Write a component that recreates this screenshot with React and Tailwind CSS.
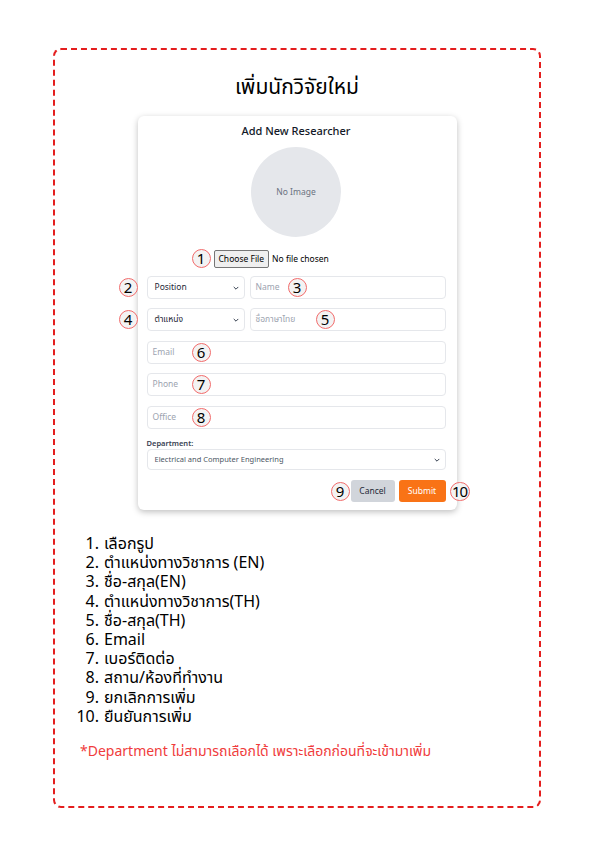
const Num = ({ n, className = "" }) => (
  <span
    className={`absolute flex items-center justify-center w-[19px] h-[19px] rounded-full border border-[#f26b6b] bg-[#f3f3f3] text-[15px] leading-none text-black ${className}`}
  >
    {n}
  </span>
);

const Chevron = () => (
  <svg width="8" height="8" viewBox="0 0 20 20" fill="none" stroke="#374151" strokeWidth="2.5" strokeLinecap="round" strokeLinejoin="round">
    <path d="M5 8l5 5 5-5" />
  </svg>
);

const Field = ({ placeholder, className = "" }) => (
  <div
    className={`h-[23px] rounded border border-[#e5e7eb] bg-white flex items-center px-[5px] text-[8.5px] text-[#9ca3af] ${className}`}
  >
    {placeholder}
  </div>
);

const Select = ({ label, className = "" }) => (
  <div
    className={`h-[23px] rounded border border-[#e5e7eb] bg-white flex items-center justify-between pl-[7px] pr-[4px] text-[8.5px] text-[#1f2937] ${className}`}
  >
    <span>{label}</span>
    <Chevron />
  </div>
);

const steps = [
  "เลือกรูป",
  "ตำแหน่งทางวิชาการ (EN)",
  "ชื่อ-สกุล(EN)",
  "ตำแหน่งทางวิชาการ(TH)",
  "ชื่อ-สกุล(TH)",
  "Email",
  "เบอร์ติดต่อ",
  "สถาน/ห้องที่ทำงาน",
  "ยกเลิกการเพิ่ม",
  "ยืนยันการเพิ่ม",
];

export default function App() {
  return (
    <div className="min-h-[842px] bg-white pt-[48px] pl-[53px] font-['Noto_Sans','Noto_Sans_Thai',sans-serif]">
      <div className="w-[488px] h-[760px] border-2 border-dashed border-[#e41e1e] rounded-lg">
        {/* Title */}
        <h1 className="mt-[21px] text-center text-[21px] leading-[30px] text-black">
          เพิ่มนักวิจัยใหม่
        </h1>

        {/* Card */}
        <div className="relative mx-auto mt-[15px] w-[319px] rounded-md bg-white shadow-[0_2px_6px_rgba(0,0,0,0.25)] pt-[8px] pb-[8px] pl-[9px] pr-[11px]">
          <p className="text-center text-[11px] leading-[14px] font-medium text-[#111827]">
            Add New Researcher
          </p>

          <div className="mx-auto mt-[9px] w-[90px] h-[90px] rounded-full bg-[#e5e7eb] flex items-center justify-center text-[8.5px] text-[#6b7280]">
            No Image
          </div>

          {/* File row */}
          <div className="relative mt-[13px] flex items-center h-[18px] pl-[67px] text-[8.5px] text-black">
            <Num n="1" className="left-[45px] top-[-1px]" />
            <span className="h-[18px] px-[4px] flex items-center border border-[#767676] rounded-[2px] bg-[#efefef]">
              Choose File
            </span>
            <span className="ml-[3px]">No file chosen</span>
          </div>

          {/* Position / Name */}
          <div className="relative mt-[8px] flex gap-[5px]">
            <Num n="2" className="left-[-28px] top-[2px]" />
            <Select label="Position" className="w-[98px]" />
            <div className="relative flex-1">
              <Field placeholder="Name" />
              <Num n="3" className="left-[38px] top-[2px]" />
            </div>
          </div>

          {/* Thai position / Thai name */}
          <div className="relative mt-[9px] flex gap-[5px]">
            <Num n="4" className="left-[-28px] top-[2px]" />
            <Select label="ตำแหน่ง" className="w-[98px]" />
            <div className="relative flex-1">
              <Field placeholder="ชื่อภาษาไทย" />
              <Num n="5" className="left-[66px] top-[2px]" />
            </div>
          </div>

          <div className="relative mt-[10px]">
            <Field placeholder="Email" />
            <Num n="6" className="left-[45px] top-[2px]" />
          </div>
          <div className="relative mt-[9px]">
            <Field placeholder="Phone" />
            <Num n="7" className="left-[45px] top-[2px]" />
          </div>
          <div className="relative mt-[10px]">
            <Field placeholder="Office" />
            <Num n="8" className="left-[45px] top-[2px]" />
          </div>

          <p className="mt-[8px] text-[7.5px] leading-[12px] font-semibold text-[#374151]">Department:</p>
          <div className="h-[21px] rounded border border-[#e5e7eb] flex items-center justify-between pl-[7px] pr-[4px] text-[7.5px] text-[#4b5563]">
            <span>Electrical and Computer Engineering</span>
            <Chevron />
          </div>

          {/* Buttons */}
          <div className="relative mt-[10px] flex justify-end gap-[4px]">
            <Num n="9" className="left-[184px] top-[2px]" />
            <button className="w-[44px] h-[22px] rounded-[3px] bg-[#d1d5db] text-[8.5px] text-[#1f2937]">
              Cancel
            </button>
            <button className="w-[47px] h-[22px] rounded-[3px] bg-[#f97316] text-[8.5px] text-white">
              Submit
            </button>
            <Num n="10" className="right-[-24px] top-[2px] w-[20px] tracking-[-1px]" />
          </div>
        </div>

        {/* Legend */}
        <ol className="mt-[24px] ml-[19px] text-[16px] leading-[19.2px] text-black">
          {steps.map((s, i) => (
            <li key={s} className="flex">
              <span className="w-[25px] text-right">{i + 1}.</span>
              <span className="ml-[5px]">{s}</span>
            </li>
          ))}
        </ol>

        <p className="mt-[15px] ml-[25px] text-[14px] leading-[20px] text-[#f03c3c]">
          *Department ไม่สามารถเลือกได้ เพราะเลือกก่อนที่จะเข้ามาเพิ่ม
        </p>
      </div>
    </div>
  );
}
